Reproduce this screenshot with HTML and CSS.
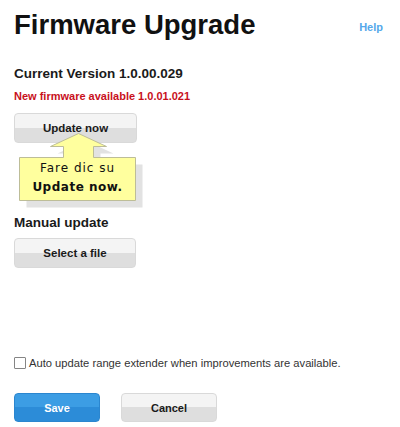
FILE: index.html
```html
<!DOCTYPE html>
<html lang="en">
<head>
    <meta charset="UTF-8">
    <meta name="viewport" content="width=device-width, initial-scale=1.0">
    <title>Firmware Upgrade</title>
    <link rel="stylesheet" href="styles.css">
</head>
<body>
    <div class="page">
        <div class="header">
            <h1 class="title">Firmware Upgrade</h1>
            <a class="help" href="#">Help</a>
        </div>

        <h2 class="section">Current Version 1.0.00.029</h2>
        <p class="notice">New firmware available 1.0.01.021</p>

        <button class="btn btn-update">Update now</button>

        <!-- tooltip pointing at the button -->
        <div class="callout">
            <svg class="callout-shape" width="124" height="75" viewBox="0 0 124 75">
                <path d="M66.5,7.5 L94.5,20.5 L81.5,20.5 L81.5,31.5 L123.5,31.5 L123.5,74.5 L7.5,74.5 L7.5,31.5 L51.5,31.5 L51.5,20.5 L38.5,20.5 Z" fill="#e2e2e2"/>
                <path d="M59.5,0.5 L87.5,13.5 L74.5,13.5 L74.5,24.5 L116.5,24.5 L116.5,67.5 L0.5,67.5 L0.5,24.5 L44.5,24.5 L44.5,13.5 L31.5,13.5 Z" fill="#ffff9e" stroke="#bdbd98" stroke-width="1"/>
            </svg>
            <div class="callout-text">Fare dic su<br><b>Update now.</b></div>
        </div>

        <h2 class="section manual">Manual update</h2>
        <button class="btn btn-select">Select a file</button>

        <label class="auto-update">
            <input type="checkbox" class="check">
            <span>Auto update range extender when improvements are available.</span>
        </label>

        <div class="actions">
            <button class="btn btn-save">Save</button>
            <button class="btn btn-cancel">Cancel</button>
        </div>
    </div>
</body>
</html>
```

FILE: styles.css
```css
body {
    font-family: "Liberation Sans", Arial, sans-serif;
    margin: 0;
    padding: 0;
    background-color: #fff;
    color: #1a1a1a;
}

.page {
    padding: 9px 17px 0 14px;
}

.header {
    display: flex;
    justify-content: space-between;
    align-items: flex-start;
}

.title {
    margin: 0;
    font-size: 27.5px;
    line-height: 31px;
    font-weight: bold;
    color: #111;
}

.help {
    margin-top: 12px;
    font-size: 11px;
    line-height: 13px;
    font-weight: bold;
    color: #55a8ea;
    text-decoration: none;
}

.section {
    margin: 26px 0 0;
    font-size: 13.5px;
    line-height: 16px;
    font-weight: bold;
}

.section.manual {
    margin-top: 7px;
}

.notice {
    margin: 8px 0 0;
    font-size: 11px;
    line-height: 13px;
    font-weight: bold;
    color: #c8101c;
}

.btn {
    display: block;
    box-sizing: border-box;
    height: 30px;
    padding: 0;
    border: 1px solid #d9d9d9;
    border-radius: 4px;
    background: linear-gradient(#f4f4f4 50%, #dedede 50%);
    font-family: "Liberation Sans", Arial, sans-serif;
    font-size: 11.5px;
    font-weight: bold;
    color: #1a1a1a;
    cursor: pointer;
}

.btn-update {
    margin-top: 10px;
    width: 123px;
}

.btn-select {
    margin-top: 7px;
    width: 122px;
}

.callout {
    position: relative;
    width: 124px;
    height: 75px;
    margin: -10px 0 0 5px;
}

.callout-shape {
    position: absolute;
    left: 0;
    top: 0;
}

.callout-text {
    position: relative;
    width: 117px;
    padding-top: 26px;
    text-align: center;
    font-family: "DejaVu Sans", Verdana, sans-serif;
    font-size: 12px;
    line-height: 19px;
    letter-spacing: 1px;
    color: #111;
}

.callout-text b {
    letter-spacing: 0.5px;
}

.auto-update {
    display: flex;
    align-items: center;
    height: 16px;
    margin-top: 87px;
    font-size: 11.2px;
    color: #333;
}

.check {
    appearance: none;
    width: 12px;
    height: 12px;
    margin: 0 3px 0 0;
    border: 1px solid #858585;
    border-radius: 1px;
    background: #fff;
}

.actions {
    display: flex;
    gap: 21px;
    margin-top: 22px;
}

.actions .btn {
    height: 29px;
    font-size: 11px;
}

.btn-save {
    width: 86px;
    border-color: #2b86cf;
    background: linear-gradient(#3c9de4 50%, #2c8cd8 50%);
    color: #fff;
}

.btn-cancel {
    width: 96px;
}
```
